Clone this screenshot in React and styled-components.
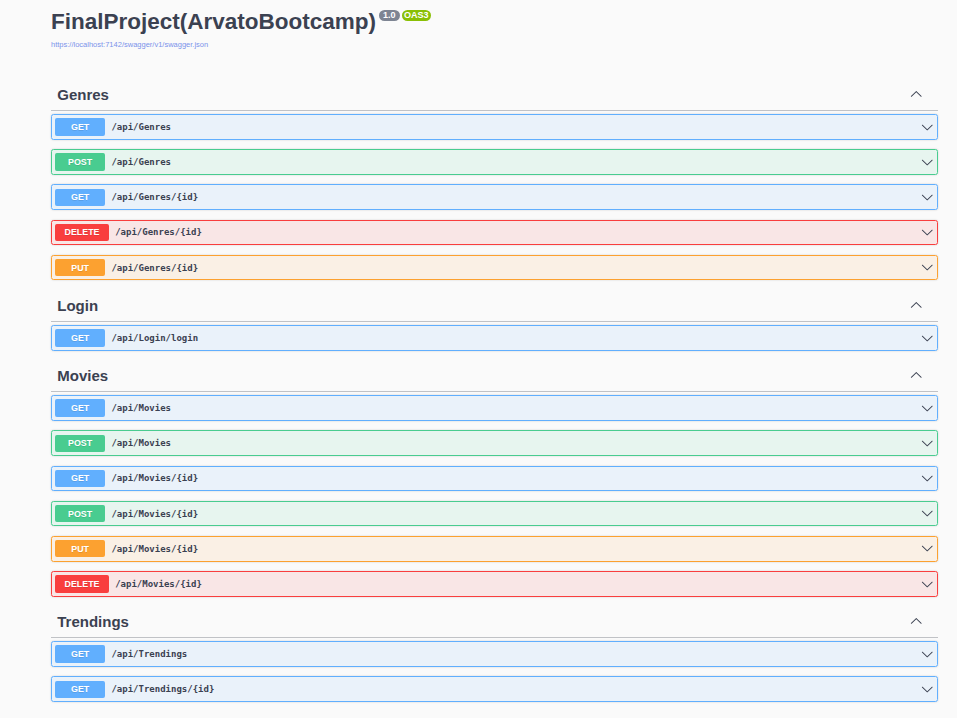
import React from "react";
import styled, { createGlobalStyle } from "styled-components";

const GlobalStyle = createGlobalStyle`
  html, body {
    margin: 0;
    padding: 0;
    background: #fafafa;
  }
  body {
    font-family: "Liberation Sans", Arial, sans-serif;
    color: #3b4151;
  }
  * {
    box-sizing: border-box;
  }
`;

const METHOD_COLORS = {
  GET: "97, 175, 254",
  POST: "73, 204, 144",
  DELETE: "249, 62, 62",
  PUT: "252, 161, 48",
};

const sections = [
  {
    name: "Genres",
    ops: [
      ["GET", "/api/Genres"],
      ["POST", "/api/Genres"],
      ["GET", "/api/Genres/{id}"],
      ["DELETE", "/api/Genres/{id}"],
      ["PUT", "/api/Genres/{id}"],
    ],
  },
  {
    name: "Login",
    ops: [["GET", "/api/Login/login"]],
  },
  {
    name: "Movies",
    ops: [
      ["GET", "/api/Movies"],
      ["POST", "/api/Movies"],
      ["GET", "/api/Movies/{id}"],
      ["POST", "/api/Movies/{id}"],
      ["PUT", "/api/Movies/{id}"],
      ["DELETE", "/api/Movies/{id}"],
    ],
  },
  {
    name: "Trendings",
    ops: [
      ["GET", "/api/Trendings"],
      ["GET", "/api/Trendings/{id}"],
    ],
  },
];

const Page = styled.div`
  padding: 9px 19px 20px 51px;
`;

const Info = styled.div`
  margin-bottom: 30px;
`;

const Title = styled.h2`
  display: flex;
  align-items: flex-start;
  margin: 0;
  font-size: 22.5px;
  line-height: 26px;
  font-weight: 700;
  color: #3b4151;
`;

const Badge = styled.small`
  display: inline-block;
  margin: 1px 0 0 ${(p) => p.$gap}px;
  padding: 0 ${(p) => p.$pad}px;
  border-radius: 57px;
  background: ${(p) => p.$bg};
  color: #fff;
  font-size: 9px;
  line-height: 11px;
  font-weight: 700;
`;

const Link = styled.a`
  display: block;
  margin-top: 5px;
  font-size: 7.5px;
  line-height: 9px;
  color: #7b93ea;
  text-decoration: none;
`;

const Section = styled.div``;

const TagHeading = styled.h3`
  display: flex;
  align-items: center;
  margin: 0 0 3px;
  padding: 6.1px 15.75px 6.1px 6.25px;
  border-bottom: 1px solid rgba(59, 65, 81, 0.3);
  font-size: 15px;
  line-height: 19px;
  font-weight: 700;
  color: #3b4151;
`;

const TagName = styled.span`
  flex: 1;
`;

const Arrow = styled.svg`
  width: 12.5px;
  height: 12.5px;
  fill: #3b4151;
  flex-shrink: 0;
  transform: ${(p) => (p.$up ? "rotate(180deg)" : "none")};
`;

const OpBlock = styled.div`
  margin: 0 0 9.375px;
  border: 1px solid rgb(${(p) => p.$rgb});
  border-radius: 2.5px;
  background: rgba(${(p) => p.$rgb}, 0.1);
  box-shadow: 0 0 1.9px rgba(0, 0, 0, 0.19);
`;

const Summary = styled.div`
  display: flex;
  align-items: center;
  padding: 3.125px;
`;

const Method = styled.span`
  min-width: 50px;
  padding: 3.75px 9.4px;
  border-radius: 1.9px;
  background: rgb(${(p) => p.$rgb});
  color: #fff;
  font-size: 8.9px;
  line-height: 10px;
  font-weight: 700;
  text-align: center;
  text-shadow: 0 1px 0 rgba(0, 0, 0, 0.1);
`;

const Path = styled.span`
  flex: 1;
  padding: 0 6.25px;
  font-family: "DejaVu Sans Mono", "Liberation Mono", monospace;
  font-size: 9px;
  font-weight: 600;
  color: #3b4151;
`;

const Chevron = ({ up }) => (
  <Arrow $up={up} viewBox="0 0 20 20" aria-hidden="true">
    <path d="M17.418 6.109c.272-.268.709-.268.979 0s.271.701 0 .969l-7.908 7.83c-.27.268-.707.268-.979 0l-7.908-7.830c-.27-.268-.27-.701 0-.969.271-.268.709-.268.979 0L10 13.25l7.418-7.141z" />
  </Arrow>
);

const Operation = ({ method, path }) => {
  const rgb = METHOD_COLORS[method];
  return (
    <OpBlock $rgb={rgb}>
      <Summary>
        <Method $rgb={rgb}>{method}</Method>
        <Path>{path}</Path>
        <Chevron />
      </Summary>
    </OpBlock>
  );
};

export default function App() {
  return (
    <>
      <GlobalStyle />
      <Page>
        <Info>
          <Title>
            FinalProject(ArvatoBootcamp)
            <Badge $bg="#7d8492" $pad={4} $gap={3}>1.0</Badge>
            <Badge $bg="#89bf04" $pad={2.5} $gap={2}>OAS3</Badge>
          </Title>
          <Link href="#">https://localhost:7142/swagger/v1/swagger.json</Link>
        </Info>
        {sections.map((s) => (
          <Section key={s.name}>
            <TagHeading>
              <TagName>{s.name}</TagName>
              <Chevron up />
            </TagHeading>
            {s.ops.map(([m, p], i) => (
              <Operation key={i} method={m} path={p} />
            ))}
          </Section>
        ))}
      </Page>
    </>
  );
}
